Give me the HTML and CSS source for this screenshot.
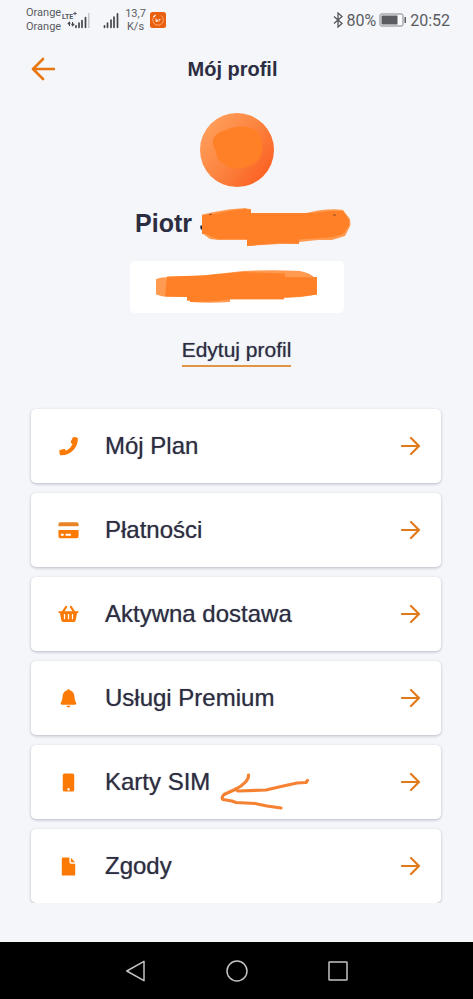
FILE: index.html
```html
<!DOCTYPE html>
<html lang="pl">
<head>
<meta charset="utf-8">
<meta name="viewport" content="width=device-width, initial-scale=1">
<title>Mój profil</title>
<link rel="stylesheet" href="styles.css">
</head>
<body>
<svg class="defs" aria-hidden="true">
  <symbol id="arrow" viewBox="0 0 20 20"><path d="M1 10H18M10 2l8 8-8 8" fill="none" stroke="currentColor" stroke-width="2.200" stroke-linecap="round" stroke-linejoin="round"/></symbol>
</svg>

<div class="status">
  <div class="carriers"><span>Orange</span><span>Orange</span></div>
  <svg class="lte" viewBox="0 0 30 20" aria-label="LTE+">
    <text class="lte-text" x="1" y="9">LTE</text>
    <path d="M14 1.800v3.400M12.300 3.500h3.400" stroke="#55565c" stroke-width="1"/>
    <path d="M8.500 16v-4M6.800 14l1.700-2.200.5 2.200zM11.500 12v4M10.800 14h2.400l-1.700 2.200z" fill="#45464c" stroke="#45464c" stroke-width="1"/>
    <path d="M15 15.800v1.500M18 13v4.300M21 10.500v6.800M24.500 7.500v9.800" stroke="#45464c" stroke-width="1.700" stroke-linecap="round"/>
    <path d="M27.800 3v15" stroke="#c6c7cb" stroke-width="1.500"/>
  </svg>
  <svg class="signal" viewBox="0 0 16 20" aria-hidden="true">
    <path d="M1.500 15.800v1.500M4.500 13v4.300M8 10v7.300M11 7v10.300M14.500 3.800v13.500" stroke="#45464c" stroke-width="1.700" stroke-linecap="round"/>
  </svg>
  <div class="speed"><span>13,7</span><span>K/s</span></div>
  <svg class="app" viewBox="0 0 16 16" aria-hidden="true">
    <rect width="16" height="16" rx="2.500" fill="#e9600f"/>
    <path d="M5 3.600A5.300 5.300 0 1 0 11 3.500" fill="none" stroke="#ffb98b" stroke-width="0.800"/>
    <path d="M3.500 5.200L5.500 3" stroke="#fff" stroke-width="1.200"/>
    <path d="M6 6.500v3h1.500v-1.500H6M9 9.500v-2h1.500" fill="none" stroke="#ffe2cf" stroke-width="1"/>
  </svg>
  <div class="status-right">
    <svg class="bt" viewBox="0 0 10 16" aria-hidden="true"><path d="M1 4.500l8 7L5 15V1l4 3.500-8 7" fill="none" stroke="#55565c" stroke-width="1.300"/></svg>
    <span>80%</span>
    <svg class="battery" viewBox="0 0 28 14" aria-hidden="true"><rect x="1" y="1" width="23" height="12" rx="1.500" fill="#f8f9fb" stroke="#808187"/><rect x="2.500" y="2.500" width="16" height="9" fill="#5b5c62"/><rect x="25.500" y="4" width="1.500" height="6" fill="#5b5c62"/></svg>
    <span class="clock">20:52</span>
  </div>
</div>

<header class="top">
  <button class="back" aria-label="Wstecz"><svg viewBox="0 0 24 24"><path d="M23 12H2M12 2L2 12l10 10" fill="none" stroke="currentColor" stroke-width="2.600" stroke-linecap="round" stroke-linejoin="round"/></svg></button>
  <h1>Mój profil</h1>
</header>

<main>
  <section class="profile">
    <svg class="avatar" viewBox="0 0 74 74" aria-hidden="true">
      <defs><linearGradient id="sun" x1="0" y1="0.100" x2="1" y2="0.900"><stop offset="0" stop-color="#ffa35f"/><stop offset="0.500" stop-color="#fc8440"/><stop offset="1" stop-color="#fb5a1c"/></linearGradient></defs>
      <circle cx="37" cy="37" r="37" fill="url(#sun)"/>
      <path d="M13 27C15 21 20 19 26 17C34 13 46 12 53 16C60 19 63 27 62 37C62 45 57 50 49 53C41 57 30 57 24 51C18 48 17 44 16 38Q12 33 13 27Z" fill="#ff8026"/>
    </svg>
    <div class="name">
      <h2>Piotr</h2>
      <svg class="name-mark" viewBox="200 206 151 34" aria-hidden="true">
        <path d="M202 225.500h-1.500q-1 3 1.500 4.500z" fill="#24243a"/>
        <path d="M202 214.500L214 212Q230 208.500 246 208V208.500L251 209V213H306L318 210.500Q335 208.500 343 210L350 219L350.500 225L345 236L332 240H318L299 242V244L280 244L247 246V240H218L210 239L202 233Z" fill="#ff9a50"/>
        <path d="M202 215.500L214 214Q230 210 246 209L251 210V213H314L329 211L343 211L349 220L349 226L343 234Q333 238 322 238L299 239.500V243.500L280 243L247 246V239L218 239L210 236L206 234H202Z" fill="#ff8026"/>
        <path d="M209 214.800l3-.8M333 215h3" stroke="#8d4b2c" stroke-width="1"/>
      </svg>
    </div>
    <div class="number">
      <svg viewBox="155 269 162 34" aria-hidden="true">
        <path d="M155 279L161 277.500L202 275.500L242 271Q270 269.500 299 271Q309 273 313 277H316V294.500L300 297L283 298V299.500L229 299.500V302Q209 303.500 189 302V300.500H186V297L162 296.500L155 294.500Z" fill="#ff9a50"/>
        <path d="M166 276.500L202 275.500L241 272L284 273.500V277L316 277.500V294.500L300 296.500L283 297.500V299L229 299Q218 301 206 301.500L189 302V300.500H186V297L164 296.500Z" fill="#ff8026"/>
      </svg>
    </div>
    <a class="edit" href="#">Edytuj profil</a>
  </section>

  <ul class="menu">
    <li><a href="#">
      <svg class="icon" viewBox="0 0 24 24" aria-hidden="true"><path d="M16.500 2.700Q17 2 18 2.100L20.800 2.700Q21.800 3 21.800 4.200Q21.600 10.500 17.700 15Q12 21.200 4.200 21.200Q3.200 21.200 3 20.300L2.300 17Q2.200 15.900 3.200 15.600L7 14.500Q7.900 14.300 8.400 15L9.700 16.500Q13.800 14.500 16.200 9.600L14.700 8.300Q14 7.800 14.400 6.900Z" fill="currentColor"/></svg>
      <span>Mój Plan</span><svg class="go"><use href="#arrow"/></svg></a></li>
    <li><a href="#">
      <svg class="icon" viewBox="0 0 24 24" aria-hidden="true"><path d="M3.500 3.500H20.500Q22.500 3.500 22.500 5.500V7.500H1.500V5.500Q1.500 3.500 3.500 3.500Z" fill="#e88425"/><path d="M1.500 11.500H22.500V18Q22.500 20 20.500 20H3.500Q1.500 20 1.500 18ZM4 15.500v2h3v-2zM9 15.500v2h5.500v-2z" fill="currentColor" fill-rule="evenodd"/></svg>
      <span>Płatności</span><svg class="go"><use href="#arrow"/></svg></a></li>
    <li><a href="#">
      <svg class="icon" viewBox="0 0 24 24" aria-hidden="true"><path d="M9.500 4L6 9.500M14.500 4L18 9.500" stroke="currentColor" stroke-width="2.200" stroke-linecap="round"/><path d="M2.200 8.500H21.800Q22.600 8.500 22.600 9.500Q22.600 10.500 21.800 10.500H21L19.500 18Q19.200 19.700 17.500 19.700H6.500Q4.800 19.700 4.500 18L3 10.500H2.200Q1.400 10.500 1.400 9.500Q1.400 8.500 2.200 8.500ZM7.200 11.500v5.500h1.300V11.500zM11.300 11.500v5.500h1.400V11.500zM15.500 11.500v5.500h1.300V11.500z" fill="currentColor" fill-rule="evenodd"/></svg>
      <span>Aktywna dostawa</span><svg class="go"><use href="#arrow"/></svg></a></li>
    <li><a href="#">
      <svg class="icon" viewBox="0 0 24 24" aria-hidden="true"><path d="M12 2Q13 2 13.200 3.500Q18 4.700 18.200 10Q18.300 14.500 20 16.500Q21 18.300 19 18.500H5Q3 18.300 4 16.500Q5.700 14.500 5.800 10Q6 4.700 10.800 3.500Q11 2 12 2ZM9.700 19.500H14.300Q13.800 21.300 12 21.300Q10.200 21.300 9.700 19.500Z" fill="currentColor"/></svg>
      <span>Usługi Premium</span><svg class="go"><use href="#arrow"/></svg></a></li>
    <li><a href="#">
      <svg class="icon" viewBox="0 0 24 24" aria-hidden="true"><path d="M8 2.500H16Q18 2.500 18 4.500V19.500Q18 21.500 16 21.500H8Q6 21.500 6 19.500V4.500Q6 2.500 8 2.500ZM12 17.800a1.300 1.300 0 1 0 .1 0z" fill="currentColor" fill-rule="evenodd"/></svg>
      <span>Karty SIM</span><svg class="go"><use href="#arrow"/></svg></a>
      <svg class="pointer" viewBox="220 770 92 42" aria-hidden="true"><path d="M248.500 775Q249 778 246 781.500Q241 787 235 789.500L224 794.500Q221 798 223 799.500L232 801L236 802.500L255 803.500L267 806L281 808M235.500 789L238 791L266 790L281 786.500L297 783L306 782.500L307.500 780.500" fill="none" stroke="#f58232" stroke-width="3.200" stroke-linecap="round" stroke-linejoin="round"/></svg></li>
    <li><a href="#">
      <svg class="icon" viewBox="0 0 24 24" aria-hidden="true"><path d="M6 2.500H13V7.500Q13 9 14.500 9H19V20.500Q19 21.500 18 21.500H6Q5 21.500 5 20.500V3.500Q5 2.500 6 2.500ZM14.500 2.800L18.800 7.500H14.500Z" fill="currentColor"/></svg>
      <span>Zgody</span><svg class="go"><use href="#arrow"/></svg></a></li>
  </ul>
</main>

<nav class="system" aria-label="System">
  <button aria-label="Wstecz"><svg viewBox="0 0 24 24"><path d="M20 2.300V21.700L2.800 12Z" fill="none" stroke="#c4c4c4" stroke-width="1.500" stroke-linejoin="round"/></svg></button>
  <button aria-label="Ekran główny"><svg viewBox="0 0 24 24"><circle cx="12" cy="12" r="10" fill="none" stroke="#c4c4c4" stroke-width="1.500"/></svg></button>
  <button aria-label="Ostatnie"><svg viewBox="0 0 24 24"><rect x="3" y="3" width="18" height="18" rx="0.500" fill="none" stroke="#c4c4c4" stroke-width="1.500"/></svg></button>
</nav>
</body>
</html>
```

FILE: styles.css
```css
* { box-sizing: border-box; }

body {
  margin: 0;
  min-height: 100vh;
  display: flex;
  flex-direction: column;
  background: #f4f6fa;
  color: #2d2d42;
  font-family: "Liberation Sans", Arial, sans-serif;
}

svg { display: block; flex: none; }
.defs { position: absolute; width: 0; height: 0; }

button {
  padding: 0;
  border: 0;
  background: none;
}

.status {
  display: flex;
  align-items: center;
  height: 40px;
  padding: 0 23px 0 26px;
  color: #5b5c62;
  font-family: Roboto, sans-serif;
}

.carriers,
.speed {
  display: flex;
  flex-direction: column;
  font-size: 11px;
  line-height: 14px;
}
.speed {
  align-items: center;
  margin: 0 4px 0 6px;
  line-height: 13px;
}
.lte { width: 30px; height: 20px; }
.lte-text { font: bold 7px Roboto, sans-serif; fill: #55565c; }
.signal { width: 16px; height: 20px; margin-left: 12px; }
.app { width: 16px; height: 16px; }

.status-right {
  display: flex;
  align-items: center;
  gap: 3px;
  margin-left: auto;
  font-size: 16px;
}
.bt { width: 10px; height: 16px; }
.battery { width: 28px; height: 14px; }

.top {
  display: grid;
  grid-template-columns: 1fr auto 1fr;
  align-items: center;
  height: 58px;
  padding: 0 39px 0 31px;
}
.top h1 {
  margin: 0;
  font-size: 20px;
  line-height: 24px;
}
.back { width: 24px; color: #ea7610; }

.profile {
  display: flex;
  flex-direction: column;
  align-items: center;
  padding-top: 15px;
}
.avatar { width: 74px; height: 74px; }

.name {
  display: flex;
  align-items: center;
  justify-content: center;
  gap: 8px;
  margin-top: 19px;
  padding-left: 13px;
}
.name h2 {
  margin: 0;
  font-size: 25px;
  line-height: 34px;
}
.name-mark { width: 151px; height: 34px; overflow: visible; }

.number {
  display: flex;
  justify-content: center;
  width: 214px;
  margin-top: 21px;
  padding: 8px 0 10px;
  border-radius: 5px;
  background: #fff;
}
.number svg { width: 162px; height: 34px; }

.edit {
  margin-top: 25px;
  padding-bottom: 3px;
  border-bottom: 2px solid #e29445;
  color: inherit;
  font-size: 21px;
  line-height: 24px;
  text-decoration: none;
  text-shadow: 0 0 1px rgba(45, 45, 66, 0.6);
}

.menu {
  display: flex;
  flex-direction: column;
  gap: 10px;
  margin: 38px 0 0;
  padding: 4px 32px 0 31px;
  overflow: hidden;
  list-style: none;
}
.menu li { position: relative; }
.menu a {
  display: flex;
  align-items: center;
  height: 74px;
  padding: 0 20px 0 26px;
  border-radius: 5px;
  background: #fff;
  box-shadow: 0 1px 3px rgba(45, 45, 66, 0.3);
  color: inherit;
  font-size: 24px;
  text-decoration: none;
  text-shadow: 0 0 1px rgba(45, 45, 66, 0.6);
}
.menu span { flex: 1; margin-left: 25px; }
.icon { width: 23px; height: 23px; color: #fb7a05; }
.go { width: 20px; height: 20px; color: #e07a1c; }

.pointer {
  position: absolute;
  top: 25px;
  left: 189px;
  width: 92px;
  height: 42px;
}

.system {
  display: flex;
  align-items: center;
  justify-content: center;
  gap: 77px;
  height: 57px;
  margin-top: auto;
  background: #000;
}
.system svg { width: 24px; height: 24px; }
```
